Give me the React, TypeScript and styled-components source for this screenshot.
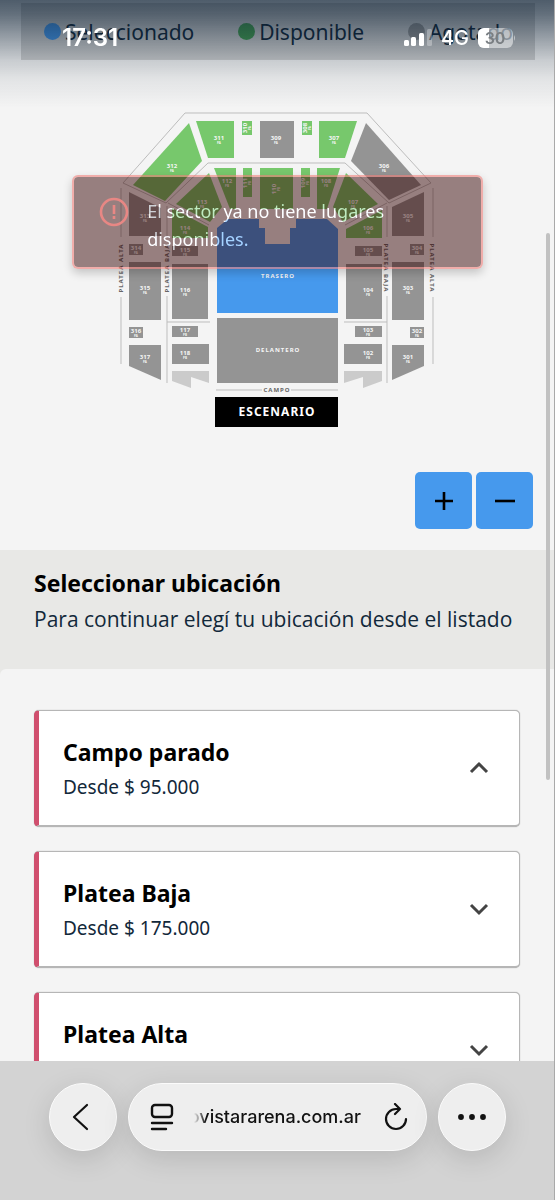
import React, { useState } from "react";
import styled, { createGlobalStyle } from "styled-components";

const GlobalStyle = createGlobalStyle`
  *, *::before, *::after { box-sizing: border-box; }
  body { margin: 0; background: #f4f4f4; font-family: "Noto Sans", "Open Sans", sans-serif; color: #12283a; }
  h1, h2, p, ul { margin: 0; padding: 0; }
  button { font: inherit; color: inherit; border: 0; padding: 0; cursor: pointer; }
`;

const Screen = styled.div`
  position: relative;
  display: flex;
  flex-direction: column;
  height: 100vh;
  overflow: hidden;
`;

const Content = styled.main`
  flex: 1;
  min-height: 0;
  overflow-y: auto;
  scrollbar-width: none;
  background: #f4f4f4;
`;

const Legend = styled.ul`
  display: flex;
  justify-content: space-between;
  align-items: center;
  height: 57px;
  margin: 3px 20px 0 21px;
  padding: 0 22px 0 23px;
  background: #d0d0d0;
  list-style: none;
`;

const LegendItem = styled.li`
  display: flex;
  align-items: center;
  gap: 4px;
  font-size: 21px;
  line-height: 28px;
`;

const Dot = styled.span<{ $color: string }>`
  width: 17px;
  height: 17px;
  border-radius: 50%;
  background: ${(p) => p.$color};
`;

const Map = styled.svg`
  display: block;
  width: 100%;
  height: auto;
`;

const ZoomRow = styled.div`
  display: flex;
  justify-content: flex-end;
  gap: 4px;
  padding: 22px 22px 21px 0;
`;

const ZoomButton = styled.button`
  display: grid;
  place-items: center;
  width: 57px;
  height: 57px;
  border-radius: 5px;
  background: #4699ed;
  color: #000;
`;

const Intro = styled.header`
  height: 119px;
  padding: 16px 34px 0;
  background: #e8e8e6;
`;

const IntroTitle = styled.h1`
  color: #000;
  font-size: 23px;
  font-weight: 700;
  line-height: 34px;
`;

const IntroText = styled.p`
  font-family: "Open Sans", sans-serif;
  font-size: 21px;
  line-height: 38px;
  white-space: nowrap;
`;

const ListBack = styled.div`
  background: #e8e8e6;
`;

const List = styled.section`
  display: flex;
  flex-direction: column;
  gap: 24px;
  padding: 41px 35px 41px 34px;
  border-top-left-radius: 6px;
  background: #f4f4f4;
`;

const Card = styled.button`
  display: flex;
  flex-shrink: 0;
  align-items: center;
  justify-content: space-between;
  width: 100%;
  height: 117px;
  padding: 0 30px 0 24px;
  border: 1px solid #b6b6b6;
  border-bottom-width: 2px;
  border-left: 5px solid #d04f6e;
  border-radius: 5px;
  background: #fff;
  box-shadow: 0 0 1px #9a9a9a;
  text-align: left;
`;

const CardTitle = styled.h2`
  padding-top: 2px;
  color: #000;
  font-size: 23px;
  font-weight: 700;
  line-height: 34px;
`;

const CardPrice = styled.p`
  padding-top: 1px;
  font-size: 19px;
  line-height: 34px;
`;

const Toast = styled.div`
  position: absolute;
  top: 175px;
  left: 13%;
  right: 13%;
  display: flex;
  align-items: flex-start;
  gap: 18px;
  padding: 20px 26px 14px 25px;
  border: 2px solid rgba(236, 125, 120, 0.6);
  border-radius: 6px;
  background: rgba(50, 0, 0, 0.48);
  background-clip: padding-box;
  box-shadow: 0 4px 10px rgba(0, 0, 0, 0.2);
`;

const ToastText = styled.p`
  max-width: 244px;
  color: rgb(105, 131, 136);
  mix-blend-mode: plus-lighter;
  font-size: 18px;
  line-height: 28px;
`;

const StatusBar = styled.div`
  position: absolute;
  inset: 0 0 auto;
  display: flex;
  justify-content: space-between;
  align-items: flex-start;
  height: 108px;
  padding: 24px 39px 0 62px;
  background: linear-gradient(
    rgba(10, 30, 50, 0.71) 0,
    rgba(10, 30, 50, 0.61) 15px,
    rgba(10, 30, 50, 0.45) 32px,
    rgba(10, 30, 50, 0.19) 60px,
    rgba(10, 30, 50, 0.07) 80px,
    rgba(10, 30, 50, 0) 108px
  );
  color: #fff;
  font-family: Inter, sans-serif;
  pointer-events: none;
`;

const Time = styled.time`
  font-size: 24px;
  font-weight: 600;
  line-height: 28px;
`;

const StatusIcons = styled.div`
  display: flex;
  align-items: center;
  gap: 9px;
  font-size: 20px;
  font-weight: 500;
  line-height: 28px;
`;

const ScrollThumb = styled.div`
  position: absolute;
  top: 233px;
  right: 5px;
  width: 4px;
  height: 547px;
  border-radius: 2px;
  background: #c1c1c1;
`;

const EdgeLine = styled.div`
  position: absolute;
  inset: 0 0 0 auto;
  width: 1px;
  background: #a9a9a9;
`;

const BrowserBar = styled.nav`
  display: flex;
  flex-shrink: 0;
  align-items: flex-start;
  gap: 11px;
  height: 139px;
  padding: 22px 49px 0;
  background: #d3d3d3;
`;

const RoundButton = styled.button`
  display: grid;
  flex-shrink: 0;
  place-items: center;
  width: 68px;
  height: 68px;
  border: 1px solid #fbfbfb;
  border-radius: 50%;
  background: #eee;
  box-shadow: 0 8px 28px rgba(0, 0, 0, 0.13);
  color: #111;
`;

const AddressBar = styled.div`
  display: flex;
  flex: 1;
  min-width: 0;
  align-items: center;
  justify-content: space-between;
  height: 68px;
  padding: 0 18px 0 20px;
  border: 1px solid #fbfbfb;
  border-radius: 34px;
  background: #eee;
  box-shadow: 0 8px 28px rgba(0, 0, 0, 0.13);
  color: #111;
`;

const IconButton = styled.button`
  display: grid;
  place-items: center;
  background: none;
`;

const Url = styled.div`
  display: flex;
  flex: 1;
  justify-content: flex-end;
  min-width: 0;
  margin: 0 23px 0 19px;
  overflow: hidden;
  font-family: Inter, sans-serif;
  font-size: 18px;
  font-weight: 500;
  line-height: 24px;
  white-space: nowrap;
  mask-image: linear-gradient(to right, transparent 0, #000 12px);
`;

const SectionShape = styled.polygon<{ $tone: Tone }>`
  fill: ${(p) => ({ free: "#77c86c", sold: "#949494", light: "#cbcbcb", picked: "#4699ed" })[p.$tone]};
`;

const MapText = styled.text<{ $size?: number; $color?: string }>`
  fill: ${(p) => p.$color ?? "#f6f6f6"};
  font-family: "Noto Sans", sans-serif;
  font-size: ${(p) => p.$size ?? 6}px;
  font-weight: 700;
  text-anchor: middle;
`;

const TrackedText = styled(MapText)`
  letter-spacing: 1px;
`;

type Tone = "free" | "sold" | "light" | "picked";
type Sector = { name: string; tone: Tone; shape: string; x: number; y: number; turn?: number };

const box = (l: number, t: number, r: number, b: number) => `${l},${t} ${r},${t} ${r},${b} ${l},${b}`;

const sectors: Sector[] = [
  { name: "312", tone: "free", shape: "189,123 202,161 165,201 133,185", x: 172, y: 168 },
  { name: "311", tone: "free", shape: "196,121 234,121 234,158 208,158", x: 219, y: 140 },
  { name: "310", tone: "free", shape: box(242, 121, 252, 135), x: 247, y: 128, turn: -90 },
  { name: "309", tone: "sold", shape: box(260, 121, 294, 158), x: 276, y: 140 },
  { name: "308", tone: "free", shape: box(302, 121, 312, 135), x: 307, y: 128, turn: -90 },
  { name: "307", tone: "free", shape: "319,121 357,121 345,158 319,158", x: 334, y: 140 },
  { name: "306", tone: "sold", shape: "366,123 421,185 389,200 351,161", x: 384, y: 168 },
  { name: "112", tone: "free", shape: "214,168 236,168 236,209 230,209", x: 227, y: 183 },
  { name: "111", tone: "free", shape: box(243, 168, 252, 197), x: 247, y: 183, turn: -90 },
  { name: "110", tone: "free", shape: box(260, 168, 293, 209), x: 276, y: 189, turn: -90 },
  { name: "109", tone: "free", shape: box(301, 168, 310, 197), x: 305, y: 183, turn: -90 },
  { name: "108", tone: "free", shape: "317,168 340,168 327,209 317,209", x: 326, y: 183 },
  { name: "113", tone: "free", shape: "209,173 222,207 210,222 176,204", x: 202, y: 204 },
  { name: "107", tone: "free", shape: "346,173 378,204 343,222 333,207", x: 353, y: 204 },
  { name: "114", tone: "free", shape: "172,208 208,227 208,238 172,238", x: 185, y: 230 },
  { name: "106", tone: "free", shape: "346,229 382,210 382,238 346,238", x: 368, y: 230 },
  { name: "313", tone: "sold", shape: "129,192 161,208 161,236 129,236", x: 145, y: 218 },
  { name: "305", tone: "sold", shape: "392,207 424,192 424,236 392,236", x: 408, y: 218 },
  { name: "314", tone: "sold", shape: box(129, 244, 143, 255), x: 136, y: 250 },
  { name: "115", tone: "sold", shape: box(172, 246, 198, 256), x: 185, y: 252 },
  { name: "105", tone: "sold", shape: box(355, 246, 382, 256), x: 368, y: 252 },
  { name: "304", tone: "sold", shape: box(410, 244, 424, 255), x: 417, y: 250 },
  { name: "315", tone: "sold", shape: box(129, 262, 161, 320), x: 145, y: 290 },
  { name: "116", tone: "sold", shape: box(172, 264, 208, 319), x: 185, y: 292 },
  { name: "104", tone: "sold", shape: box(346, 264, 382, 319), x: 368, y: 292 },
  { name: "303", tone: "sold", shape: box(392, 262, 424, 320), x: 408, y: 290 },
  { name: "316", tone: "sold", shape: box(129, 327, 143, 338), x: 136, y: 333 },
  { name: "117", tone: "sold", shape: box(172, 326, 198, 337), x: 185, y: 332 },
  { name: "103", tone: "sold", shape: box(355, 326, 382, 337), x: 368, y: 332 },
  { name: "302", tone: "sold", shape: box(410, 327, 424, 338), x: 417, y: 333 },
  { name: "317", tone: "sold", shape: "129,345 161,345 161,380 129,366", x: 145, y: 359 },
  { name: "118", tone: "sold", shape: box(172, 344, 209, 364), x: 185, y: 355 },
  { name: "102", tone: "sold", shape: box(344, 344, 382, 364), x: 368, y: 355 },
  { name: "301", tone: "sold", shape: "392,345 424,345 424,366 392,380", x: 408, y: 359 },
];

function SectorMark({ name, tone, shape, x, y, turn = 0 }: Sector) {
  return (
    <g>
      <SectionShape $tone={tone} points={shape} />
      <g transform={`rotate(${turn} ${x} ${y})`}>
        <MapText x={x} y={y}>{name}</MapText>
        <MapText x={x} y={y + 4} $size={3}>{name[0] === "3" ? "PA" : "PB"}</MapText>
      </g>
    </g>
  );
}

function VenueMap() {
  return (
    <Map viewBox="0 60 555 390" role="img" aria-label="Mapa de sectores">
      <g fill="none" stroke="#bdbdbd" strokeWidth="1">
        <path d="M123 183 185 113H367L431 183 389 203 345 163H208L166 203Z" />
        <path d="M121 188V237M121 297V364M433 188V237M433 297V364" />
        <path d="M168 203 209 225M387 203 345 225M167 206V237M387 206V237" />
        <path d="M167 296V383M387 296V383M167 322H210M344 322H387" />
        <path d="M216 390H262M291 390H338" />
      </g>
      {sectors.map((s) => (
        <SectorMark key={s.name} {...s} />
      ))}
      <SectionShape $tone="light" points="172,371 209,371 209,383 191,377 191,388 172,381" />
      <SectionShape $tone="light" points="344,371 382,371 382,381 363,388 363,377 344,383" />
      <SectionShape
        $tone="picked"
        points="217,228 228,219 259,219 259,228 265,228 265,244 290,244 290,228 296,228 296,219 327,219 338,229 338,313 217,313"
      />
      <SectionShape $tone="sold" points={box(217, 318, 338, 383)} />
      <rect x="215" y="397" width="123" height="30" fill="#000" />
      <TrackedText x="278" y="278">TRASERO</TrackedText>
      <TrackedText x="278" y="352">DELANTERO</TrackedText>
      <TrackedText x="277" y="392" $color="#666">CAMPO</TrackedText>
      <TrackedText x="277" y="416" $size={12} $color="#fff">ESCENARIO</TrackedText>
      <TrackedText $color="#666" transform="translate(123 268) rotate(-90)">PLATEA ALTA</TrackedText>
      <TrackedText $color="#666" transform="translate(169 268) rotate(-90)">PLATEA BAJA</TrackedText>
      <TrackedText $color="#666" transform="translate(384 268) rotate(90)">PLATEA BAJA</TrackedText>
      <TrackedText $color="#666" transform="translate(430 268) rotate(90)">PLATEA ALTA</TrackedText>
    </Map>
  );
}

function Chevron({ up }: { up: boolean }) {
  return (
    <svg width="20" height="20" viewBox="0 0 20 20" fill="none" stroke="#444" strokeWidth="3">
      <path d={up ? "M2 14 10 6 18 14" : "M2 6 10 14 18 6"} />
    </svg>
  );
}

const places = [
  { name: "Campo parado", price: "Desde $ 95.000" },
  { name: "Platea Baja", price: "Desde $ 175.000" },
  { name: "Platea Alta", price: "Desde $ 95.000" },
];

export default function App() {
  const [open, setOpen] = useState("Campo parado");
  return (
    <Screen>
      <GlobalStyle />
      <Content>
        <Legend>
          <LegendItem><Dot $color="#4699ed" />Seleccionado</LegendItem>
          <LegendItem><Dot $color="#46a050" />Disponible</LegendItem>
          <LegendItem><Dot $color="#949494" />Agotado</LegendItem>
        </Legend>
        <VenueMap />
        <ZoomRow>
          <ZoomButton aria-label="Acercar">
            <svg width="18" height="18" viewBox="0 0 18 18" stroke="currentColor" strokeWidth="2.6"><path d="M9 0V18M0 9H18" /></svg>
          </ZoomButton>
          <ZoomButton aria-label="Alejar">
            <svg width="20" height="18" viewBox="0 0 20 18" stroke="currentColor" strokeWidth="2.6"><path d="M0 9H20" /></svg>
          </ZoomButton>
        </ZoomRow>
        <Intro>
          <IntroTitle>Seleccionar ubicación</IntroTitle>
          <IntroText>Para continuar elegí tu ubicación desde el listado</IntroText>
        </Intro>
        <ListBack>
          <List>
            {places.map((p) => (
              <Card key={p.name} aria-expanded={open === p.name} onClick={() => setOpen(open === p.name ? "" : p.name)}>
                <div>
                  <CardTitle>{p.name}</CardTitle>
                  <CardPrice>{p.price}</CardPrice>
                </div>
                <Chevron up={open === p.name} />
              </Card>
            ))}
          </List>
        </ListBack>
      </Content>

      <BrowserBar aria-label="Navegador">
        <RoundButton aria-label="Atrás">
          <svg width="30" height="30" viewBox="0 0 30 30" fill="none" stroke="currentColor" strokeWidth="2.2" strokeLinecap="round" strokeLinejoin="round"><path d="M19 3 6 15 19 27" /></svg>
        </RoundButton>
        <AddressBar>
          <IconButton aria-label="Página">
            <svg width="26" height="28" viewBox="0 0 26 28" fill="none" stroke="currentColor" strokeWidth="2.4" strokeLinecap="round"><rect x="3" y="2" width="20" height="12" rx="3" /><path d="M3 20H23M3 26H17" /></svg>
          </IconButton>
          <Url><span>movistararena.com.ar</span></Url>
          <IconButton aria-label="Recargar">
            <svg width="24" height="28" viewBox="0 0 24 28" fill="none" stroke="currentColor" strokeWidth="2.2" strokeLinecap="round" strokeLinejoin="round"><path d="M22 16A10 10 0 1 1 12 6H16M11 1 16 6 11 11" /></svg>
          </IconButton>
        </AddressBar>
        <RoundButton aria-label="Más opciones">
          <svg width="28" height="8" viewBox="0 0 28 8" fill="currentColor"><circle cx="3" cy="4" r="2.9" /><circle cx="14" cy="4" r="2.9" /><circle cx="25" cy="4" r="2.9" /></svg>
        </RoundButton>
      </BrowserBar>

      <Toast role="alert">
        <svg width="30" height="32" viewBox="0 0 30 32" fill="none" stroke="#e88784" strokeWidth="2.6"><circle cx="15" cy="15" r="13" /><path d="M15 8V17M15 19V22" /></svg>
        <ToastText>El sector ya no tiene lugares disponibles.</ToastText>
      </Toast>
      <ScrollThumb />
      <StatusBar>
        <Time>17:31</Time>
        <StatusIcons>
          <svg width="28" height="18" viewBox="0 0 28 18" fill="#fff"><rect x="0" y="11" width="5" height="6" rx="1.5" /><rect x="7" y="8" width="5" height="9" rx="1.5" /><rect x="15" y="4" width="5" height="13" rx="1.5" /><rect x="23" y="0" width="5" height="17" rx="1.5" opacity=".3" /></svg>
          <span>4G</span>
          <svg width="38" height="20" viewBox="0 0 38 20">
            <defs><clipPath id="battery"><rect width="35" height="20" rx="6" /></clipPath></defs>
            <g clipPath="url(#battery)"><rect width="35" height="20" fill="#fff" opacity=".5" /><rect width="11" height="20" fill="#fff" /></g>
            <path d="M36 7Q38 10 36 13Z" fill="#fff" opacity=".5" />
            <text x="17" y="16" textAnchor="middle" fontFamily="Inter, sans-serif" fontSize="16" fontWeight="600" fill="#7a7f83">30</text>
          </svg>
        </StatusIcons>
      </StatusBar>
      <EdgeLine />
    </Screen>
  );
}
